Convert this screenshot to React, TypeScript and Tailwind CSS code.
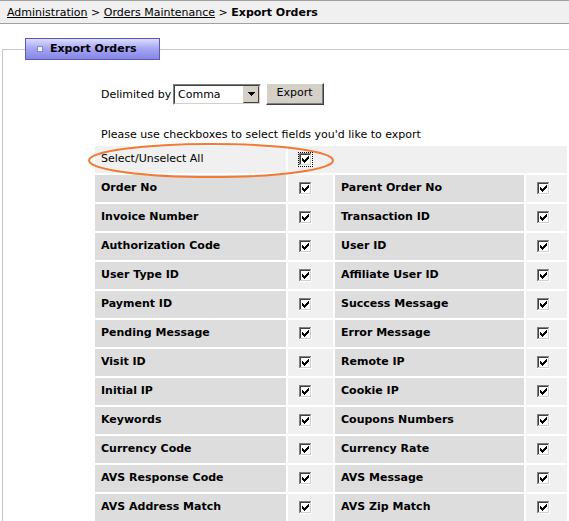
import React from 'react';

const rows: [string, string][] = [
  ['Order No', 'Parent Order No'],
  ['Invoice Number', 'Transaction ID'],
  ['Authorization Code', 'User ID'],
  ['User Type ID', 'Affiliate User ID'],
  ['Payment ID', 'Success Message'],
  ['Pending Message', 'Error Message'],
  ['Visit ID', 'Remote IP'],
  ['Initial IP', 'Cookie IP'],
  ['Keywords', 'Coupons Numbers'],
  ['Currency Code', 'Currency Rate'],
  ['AVS Response Code', 'AVS Message'],
  ['AVS Address Match', 'AVS Zip Match'],
  ['', ''],
];

// classic 7x7 check glyph, drawn pixel by pixel
const CHECK = [
  '......X',
  '.....XX',
  'X...XXX',
  'XX.XXX.',
  'XXXXX..',
  '.XXX...',
  '..X....',
];

function Checkbox({ focused = false }: { focused?: boolean }) {
  return (
    <span className={focused ? 'inline-flex p-[1px] outline outline-1 outline-dotted outline-black -outline-offset-1' : 'inline-flex'}>
      <svg width="13" height="13" viewBox="0 0 13 13" shapeRendering="crispEdges">
        <rect x="0" y="0" width="13" height="13" fill="#ffffff" />
        <rect x="0" y="0" width="12" height="12" fill="#808080" />
        <rect x="1" y="1" width="11" height="11" fill="#d4d0c8" />
        <rect x="1" y="1" width="10" height="10" fill="#404040" />
        <rect x="2" y="2" width="9" height="9" fill="#ffffff" />
        {CHECK.flatMap((line, r) =>
          line.split('').map((c, col) =>
            c === 'X' ? <rect key={`${r}-${col}`} x={3 + col} y={3 + r} width="1" height="1" fill="#000" /> : null,
          ),
        )}
      </svg>
    </span>
  );
}

function Select() {
  return (
    <div className="h-[21px] w-[88px] border-t border-l border-t-[#808080] border-l-[#808080] border-b border-r border-b-white border-r-white">
      <div className="flex h-full w-full items-center border-t border-l border-t-[#404040] border-l-[#404040] border-b border-r border-b-[#d4d0c8] border-r-[#d4d0c8] bg-white">
        <span className="flex-1 pl-[3px] text-[11px] leading-none">Comma</span>
        <div className="flex h-full w-[16px] items-center justify-center border-t border-l border-t-[#d4d0c8] border-l-[#d4d0c8] border-b border-r border-b-[#404040] border-r-[#404040] bg-[#d4d0c8]">
          <svg width="7" height="4" viewBox="0 0 7 4" shapeRendering="crispEdges">
            <path d="M0 0h7v1H0zM1 1h5v1H1zM2 2h3v1H2zM3 3h1v1H3z" fill="#000" />
          </svg>
        </div>
      </div>
    </div>
  );
}

export default function App() {
  return (
    <div className="h-[521px] w-[569px] overflow-hidden bg-white font-['DejaVu_Sans',Verdana,sans-serif] text-black">
      {/* ── Breadcrumb ─────────────────────────────── */}
      <div className="flex h-[24px] items-center border-y border-[#a0a0a0] bg-[#f0f0f0] pl-[7px] pt-[2px] text-[11px]">
        <a className="underline">Administration</a>
        <span>&nbsp;&gt;&nbsp;</span>
        <a className="underline">Orders Maintenance</a>
        <span>&nbsp;&gt;&nbsp;</span>
        <b>Export Orders</b>
      </div>

      {/* ── Panel ─────────────────────────────────── */}
      <fieldset className="mt-[14px] ml-[2px] border-t border-l border-[#c8c8c8]">
        <legend className="ml-[22px] h-[22px] w-[135px] border border-[#5a5ab4] bg-linear-to-b from-[#dcdcfe] via-[#a4a4f2] to-[#8686e6]">
          <div className="flex h-full items-center pl-[11px]">
            <span className="mr-[7px] h-[6px] w-[6px] border border-[#8888cc] bg-[#f4f4ff]" />
            <b className="text-[11px]">Export Orders</b>
          </div>
        </legend>

        <div className="pl-[92px]">
          <div className="mt-[23px] flex h-[22px] items-center">
            <span className="w-[78px] pl-[6px] pt-[2px] text-[11px]">Delimited by</span>
            <Select />
            <button className="ml-[5px] h-[22px] w-[58px] border-t border-l border-t-white border-l-white border-b border-r border-b-[#404040] border-r-[#404040] bg-[#d4d0c8]">
              <div className="flex h-full items-center justify-center border-b border-r border-b-[#808080] border-r-[#808080] text-[11px]">
                Export
              </div>
            </button>
          </div>

          <div className="mt-[23px] pl-[6px] text-[11px] leading-[13px]">
            Please use checkboxes to select fields you'd like to export
          </div>

          <div className="relative mt-[5px] w-[472px]">
            <svg className="pointer-events-none absolute left-[-8px] top-[-4px] z-10" width="250" height="40" viewBox="0 0 250 40">
              <ellipse cx="124" cy="18.5" rx="122" ry="16.5" fill="none" stroke="#f07a36" strokeWidth="2" />
            </svg>
            <div className="grid grid-cols-[191px_45px_189px_41px] gap-[2px] text-[11px]">
              <div className="flex h-[27px] items-center bg-[#f0f0f0] pl-[6px]">Select/Unselect All</div>
              <div className="col-span-3 flex items-center bg-[#f0f0f0] pl-[10px]">
                <Checkbox focused />
              </div>
              {rows.map(([a, b], i) => (
                <React.Fragment key={i}>
                  <div className="flex h-[27px] items-center bg-[#dddddd] pl-[6px] font-bold">{a}</div>
                  <div className="flex items-center bg-[#f0f0f0] pl-[11px]">
                    {a && <Checkbox />}
                  </div>
                  <div className="flex items-center bg-[#dddddd] pl-[6px] font-bold">{b}</div>
                  <div className="flex items-center bg-[#f0f0f0] pl-[11px]">
                    {b && <Checkbox />}
                  </div>
                </React.Fragment>
              ))}
            </div>
          </div>
        </div>
      </fieldset>
    </div>
  );
}
